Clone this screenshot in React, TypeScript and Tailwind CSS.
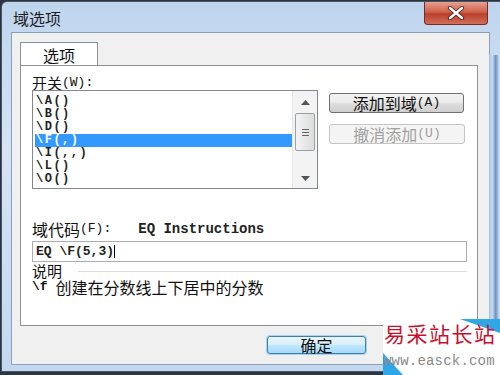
import React from "react";

const cjk = { fontFamily: '"Noto Sans CJK SC", "Liberation Sans", sans-serif' };
const mono = { fontFamily: '"Liberation Mono", "Noto Sans CJK SC", monospace' };

const items = ["\\A()", "\\B()", "\\D()", "\\F(,)", "\\I(,,)", "\\L()", "\\O()"];

export default function App() {
  return (
    <div className="relative w-[500px] h-[375px] overflow-hidden bg-[#2b3440]">
      <div className="absolute left-[1px] top-[1px] w-[520px] h-[371px] rounded-tl-[6px] border border-[#4a5564] bg-[linear-gradient(180deg,#bfd5ee_0%,#d4e4f5_40%,#c3d8ef_100%)] flex flex-col pl-[9px]">
        {/* title bar */}
        <div className="h-[30px] flex items-start relative">
          <div className="pt-[6px] pl-[2px] text-[16px] leading-[20px] text-[#1e1e1e]" style={cjk}>
            域选项
          </div>
          <div className="absolute left-[413px] top-[0px] w-[64px] h-[23px] rounded-b-[4px] border border-[#7a2a20] border-t-0 bg-[linear-gradient(180deg,#e7a08e_0%,#d0624c_45%,#b8402c_55%,#d2705a_100%)] flex items-center justify-center">
            <svg width="18" height="14" viewBox="0 0 18 14">
              <path d="M3 2 L15 12 M15 2 L3 12" stroke="#3a1410" strokeWidth="4.2" strokeLinecap="round" />
              <path d="M3 2 L15 12 M15 2 L3 12" stroke="#ffffff" strokeWidth="2.6" strokeLinecap="round" />
            </svg>
          </div>
        </div>
        {/* client */}
        <div className="w-[479px] h-[333px] border border-[#8aa0bb] bg-[#f0f0f0] pl-[8px] pt-[9px] flex flex-col">
          {/* tab */}
          <div className="w-[78px] h-[24px] border border-b-0 border-[#8e9198] bg-white flex items-center justify-center text-[16px] text-[#111]" style={cjk}>
            选项
          </div>
          <div className="w-[458px] h-[261px] -mt-[1px] border border-[#8e9198] bg-white pl-[11px] pt-[9px] flex flex-col">
            <div className="h-[16px] text-[15px] leading-[16px] text-[#111] flex items-center" style={cjk}>
              开关<span className="text-[13px]" style={mono}>(W):</span>
            </div>
            <div className="flex mt-[-1px] gap-[11px]">
              <div className="w-[286px] h-[99px] border border-[#828790] flex">
                <div className="flex-1 pt-[4px] pl-[2px]">
                  {items.map((t, i) => (
                    <div
                      key={i}
                      className={
                        "h-[13px] leading-[13px] text-[12px] font-bold tracking-[1.5px] pl-[1px] " +
                        (i === 3 ? "bg-[#3399ff] text-white" : "text-[#222]")
                      }
                      style={mono}
                    >
                      {t}
                    </div>
                  ))}
                </div>
                <div className="w-[25px] h-full bg-[#f3f3f3] border-l border-[#e6e6e6] flex flex-col items-center">
                  <div className="h-[22px] flex items-center justify-center">
                    <svg width="9" height="5" viewBox="0 0 9 5"><path d="M0 5 L4.5 0 L9 5Z" fill="#555" /></svg>
                  </div>
                  <div className="w-[20px] h-[38px] rounded-[2px] border border-[#9aa1a8] bg-[linear-gradient(90deg,#f4f4f4,#dcdcdc)] flex flex-col items-center justify-center gap-[2px]">
                    <div className="w-[7px] h-[1px] bg-[#666]" />
                    <div className="w-[7px] h-[1px] bg-[#666]" />
                    <div className="w-[7px] h-[1px] bg-[#666]" />
                  </div>
                  <div className="flex-1" />
                  <div className="h-[20px] flex items-center justify-center">
                    <svg width="9" height="5" viewBox="0 0 9 5"><path d="M0 0 L4.5 5 L9 0Z" fill="#555" /></svg>
                  </div>
                </div>
              </div>
              <div className="flex flex-col gap-[11px] pt-[3px]">
                <div className="w-[135px] h-[20px] rounded-[3px] border border-[#707070] bg-[linear-gradient(180deg,#f2f2f2_0%,#ebebeb_45%,#dddddd_55%,#cfcfcf_100%)] flex items-center justify-center text-[16px] leading-[16px] text-[#111]" style={cjk}>
                  添加到域<span className="text-[13px]" style={mono}>(A)</span>
                </div>
                <div className="w-[136px] h-[20px] rounded-[3px] border border-[#c5c5c5] bg-[#f4f4f4] flex items-center justify-center text-[16px] leading-[16px] text-[#a0a0a0]" style={cjk}>
                  撤消添加<span className="text-[13px]" style={mono}>(U)</span>
                </div>
              </div>
            </div>
            <div className="mt-[32px] flex items-center h-[16px]">
              <span className="text-[16px] leading-[16px] text-[#111]" style={cjk}>域代码</span>
              <span className="text-[13px] text-[#111]" style={mono}>(F):</span>
              <span className="ml-[27px] text-[14px] font-bold text-[#222]" style={mono}>EQ Instructions</span>
            </div>
            <div className="mt-[4px] w-[435px] h-[21px] border border-[#abadb3] flex items-center pl-[3px]">
              <span className="text-[13px] font-bold text-[#222]" style={mono}>EQ \F(5,3)</span>
              <span className="w-[1px] h-[13px] bg-black" />
            </div>
            <div className="mt-[0px] flex items-center w-[435px] h-[16px]">
              <span className="text-[15px] leading-[15px] text-[#111]" style={cjk}>说明</span>
              <div className="flex-1 h-[1px] bg-[#dcdcdc] ml-[16px] mt-[2px]" />
            </div>
            <div className="mt-[1px] flex items-center h-[16px] text-[16px] leading-[16px] text-[#111]">
              <span className="text-[13px] font-bold" style={mono}>\f</span>
              <span className="ml-[8px]" style={cjk}>创建在分数线上下居中的分数</span>
            </div>
          </div>
          <div className="flex pl-[247px] pt-[10px]">
            <div className="w-[99px] h-[18px] rounded-[3px] border border-[#3c7fb1] shadow-[0_0_0_1px_#a6d4f2] bg-[linear-gradient(180deg,#eaf6fd_0%,#d9f0fc_45%,#bee6fd_55%,#a7d9f5_100%)] flex items-center justify-center text-[16px] leading-[16px] text-[#111]" style={cjk}>
              确定
            </div>
          </div>
        </div>
      </div>
      {/* right frame stripes */}
      <div className="absolute left-[489px] top-[55px] w-[11px] h-[265px] bg-[linear-gradient(90deg,#a7c3e2_0%,#c9dbf0_30%,#6e93c4_60%,#dbe8f6_100%)]" />
      {/* watermark */}
      <div className="absolute left-[383px] top-[319px] w-[117px] h-[56px] bg-white overflow-hidden">
        <div className="absolute right-0 top-0 w-0 h-0 border-t-[14px] border-l-[40px] border-t-[#2fa6e6] border-l-transparent" />
        <div className="absolute left-0 bottom-0 w-0 h-0 border-b-[22px] border-r-[20px] border-b-[#2fa6e6] border-r-transparent" />
        <div className="absolute left-[1px] top-[2px] text-[21px] leading-[24px] text-[#c8102e] tracking-[1.5px]" style={{ fontFamily: '"Noto Sans CJK SC", serif' }}>
          易采站长站
        </div>
        <div className="absolute left-[0px] top-[34px] text-[14px] leading-[16px] text-[#8a8a8a] tracking-[0.2px]" style={{ fontFamily: '"Liberation Mono", monospace' }}>
          www.easck.com
        </div>
      </div>
    </div>
  );
}
